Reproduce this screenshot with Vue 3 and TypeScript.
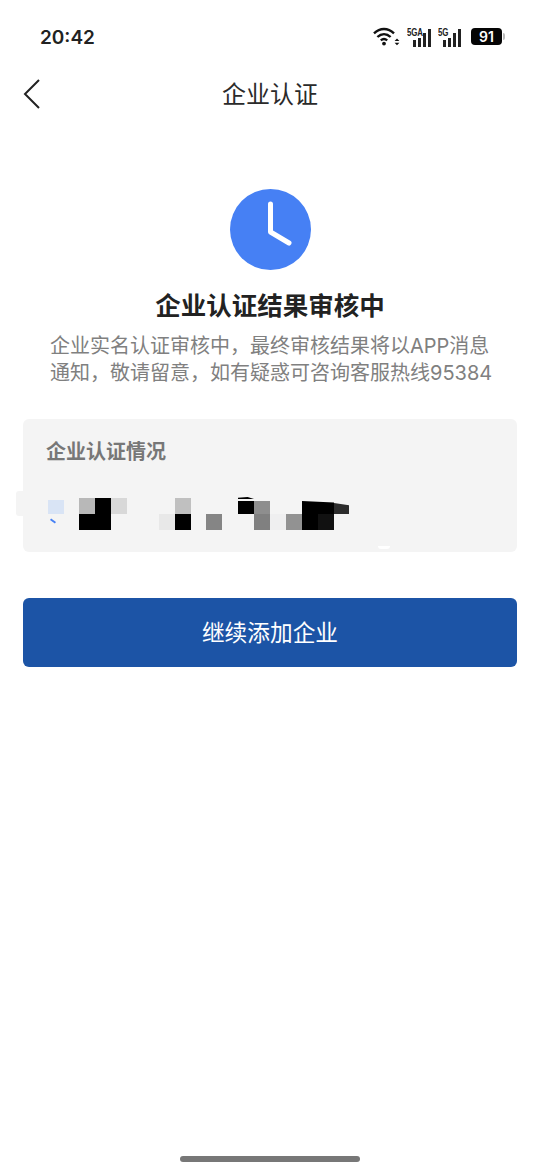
<script setup lang="ts">
interface Cell { x: number; y: number; w: number; h: number; c: string }
const cells: Cell[] = [
  { x: 25, y: 81, w: 16, h: 14, c: '#d9e4f5' },
  { x: 56, y: 79, w: 16, h: 16, c: '#b8b8b8' },
  { x: 72, y: 79, w: 16, h: 16, c: '#000' },
  { x: 88, y: 79, w: 16, h: 16, c: '#d8d8d8' },
  { x: 56, y: 95, w: 32, h: 16, c: '#000' },
  { x: 152, y: 79, w: 16, h: 16, c: '#c0c0c0' },
  { x: 136, y: 95, w: 16, h: 16, c: '#e8e8e8' },
  { x: 152, y: 95, w: 16, h: 16, c: '#000' },
  { x: 183, y: 95, w: 16, h: 16, c: '#858585' },
  { x: 215, y: 82, w: 16, h: 13, c: '#000' },
  { x: 231, y: 82, w: 16, h: 13, c: '#8e8e8e' },
  { x: 231, y: 95, w: 16, h: 16, c: '#808080' },
  { x: 247, y: 95, w: 16, h: 16, c: '#efeff0' },
  { x: 263, y: 95, w: 16, h: 16, c: '#929292' },
  { x: 279, y: 95, w: 16, h: 16, c: '#000' },
  { x: 295, y: 95, w: 16, h: 16, c: '#111' },
]
const cellStyle = (c: Cell) => ({
  left: `${c.x}px`, top: `${c.y}px`, width: `${c.w}px`, height: `${c.h}px`, background: c.c,
})
</script>

<template>
  <div class="page">
    <div class="status">
      <span class="time">20:42</span>
      <div class="status-icons">
        <svg class="wifi" width="27" height="20" viewBox="0 0 27 20" fill="none" stroke="#111" stroke-width="2.4">
          <path d="M1 6.4C7 .6 15 .6 21 6.4" />
          <path d="M4.4 10C8.4 6.2 13.6 6.2 17.6 10" />
          <path d="M7.8 13.4C9.9 11.6 12.1 11.6 14.2 13.4" />
          <circle cx="11" cy="16.6" r="1.9" fill="#111" stroke="none" />
          <path d="M21.6 14L24 11.6L26.4 14Z M21.6 15.8L24 18.2L26.4 15.8Z" fill="#111" stroke="none" />
        </svg>
        <div class="signal sig-a">
          <span class="net">5GA</span>
          <span class="bar b1"></span><span class="bar b2"></span><span class="bar b3"></span><span class="bar b4"></span>
        </div>
        <div class="signal sig-b">
          <span class="net">5G</span>
          <span class="bar b1"></span><span class="bar b2"></span><span class="bar b3"></span><span class="bar b4"></span>
        </div>
        <div class="battery"><span class="level">91</span><span class="cap"></span></div>
      </div>
    </div>

    <header class="nav">
      <svg class="back" width="18" height="30" viewBox="0 0 18 30" fill="none" stroke="#222" stroke-width="2">
        <path d="M16 1L2 15L16 29" />
      </svg>
      <span class="nav-title">企业认证</span>
    </header>

    <main class="content">
      <svg class="clock" width="81" height="81" viewBox="0 0 81 81">
        <circle cx="40.5" cy="40.5" r="40.5" fill="#4680f4" />
        <path d="M40.5 15V43L59 54" fill="none" stroke="#fff" stroke-width="5" stroke-linecap="round" stroke-linejoin="round" />
      </svg>
      <h1 class="heading">企业认证结果审核中</h1>
      <p class="desc">企业实名认证审核中，最终审核结果将以APP消息<br />通知，敬请留意，如有疑惑可咨询客服热线95384</p>

      <section class="card">
        <h2 class="card-title">企业认证情况</h2>
        <span class="bump"></span>
        <span class="tick"></span>
        <span v-for="(c, i) in cells" :key="i" class="cell" :style="cellStyle(c)"></span>
        <span class="cell-wedge wedge-a"></span>
        <span class="cell-wedge wedge-b"></span>
        <span class="cell-wedge wedge-c"></span>
        <span class="chip"></span>
      </section>

      <button class="primary" type="button">继续添加企业</button>
    </main>

    <div class="home-bar"></div>
  </div>
</template>

<style scoped>
.page {
  position: relative;
  width: 540px;
  height: 1172px;
  background: #fff;
  overflow: hidden;
  font-family: "Noto Sans CJK SC", "Noto Sans", sans-serif;
  display: flex;
  flex-direction: column;
}
.status {
  height: 66px;
  padding: 7px 35px 0 40px;
  display: flex;
  align-items: center;
  justify-content: space-between;
  box-sizing: border-box;
}
.time {
  margin-top: 2px;
  font-family: Inter, "Liberation Sans", sans-serif;
  font-size: 19px;
  font-weight: 600;
  color: #222;
}
.status-icons {
  display: flex;
  align-items: center;
  gap: 6px;
}
.signal {
  position: relative;
  height: 20px;
  width: 25px;
  display: flex;
  align-items: flex-end;
  justify-content: flex-end;
  gap: 2px;
}
.sig-b { margin-left: -1px; }
.net {
  position: absolute;
  left: 1px;
  top: 0;
  font-family: "Liberation Sans", sans-serif;
  font-size: 11px;
  font-weight: 700;
  line-height: 10px;
  letter-spacing: -0.3px;
  color: #222;
  transform: scaleX(0.72);
  transform-origin: left top;
}
.sig-b .net { left: 2px; }
.bar { width: 3px; background: #222; }
.b1 { height: 7px; }
.b2 { height: 9px; }
.b3 { height: 14px; }
.b4 { height: 18px; }
.battery {
  display: flex;
  align-items: center;
  margin-left: 4px;
}
.level {
  width: 31px;
  height: 17px;
  background: #050505;
  border-radius: 4px;
  color: #fff;
  font-family: Inter, "Liberation Sans", sans-serif;
  font-size: 14px;
  font-weight: 600;
  line-height: 17px;
  text-align: center;
}
.cap {
  width: 2px;
  height: 7px;
  margin-left: 1px;
  background: #bbb;
  border-radius: 0 2px 2px 0;
}
.nav {
  position: relative;
  height: 56px;
  display: flex;
  align-items: center;
  justify-content: center;
}
.back {
  position: absolute;
  left: 23px;
  top: 13px;
}
.nav-title {
  margin-bottom: 2px;
  font-size: 24px;
  line-height: 30px;
  color: #2a2a2a;
}
.content {
  padding: 67px 23px 0;
  display: flex;
  flex-direction: column;
  align-items: center;
}
.clock { display: block; }
.heading {
  margin: 16px 0 0;
  font-size: 25.5px;
  line-height: 36px;
  font-weight: 700;
  color: #222;
}
.desc {
  margin: 11px 0 0;
  width: 440px;
  font-family: Inter, "Noto Sans CJK SC", sans-serif;
  font-size: 20px;
  line-height: 26.5px;
  color: #808080;
  white-space: nowrap;
}
.card {
  position: relative;
  align-self: stretch;
  height: 133px;
  margin-top: 33px;
  background: #f4f4f4;
  border-radius: 6px;
}
.card-title {
  margin: 0;
  padding: 18px 23px 0;
  font-size: 20px;
  line-height: 28px;
  font-weight: 700;
  color: #777;
}
.bump {
  position: absolute;
  left: -7px;
  top: 72px;
  width: 7px;
  height: 25px;
  background: #f4f4f4;
  border-radius: 3px 0 0 3px;
}
.tick {
  position: absolute;
  left: 27px;
  top: 101px;
  width: 6px;
  height: 2px;
  background: #4680f4;
  transform: rotate(35deg);
}
.cell { position: absolute; }
.cell-wedge { position: absolute; }
.wedge-a {
  left: 279px;
  top: 82px;
  width: 32px;
  height: 13px;
  background: #000;
  clip-path: polygon(0 0, 100% 12%, 100% 100%, 0 100%);
}
.wedge-b {
  left: 311px;
  top: 84px;
  width: 15px;
  height: 11px;
  background: #2c2c2c;
  clip-path: polygon(0 0, 100% 20%, 100% 100%, 0 100%);
}
.wedge-c {
  left: 215px;
  top: 78px;
  width: 16px;
  height: 2px;
  background: #000;
  clip-path: polygon(0 40%, 60% 0, 100% 100%, 0 100%);
}
.chip {
  position: absolute;
  left: 355px;
  top: 127px;
  width: 12px;
  height: 3px;
  background: #fff;
  border-radius: 0 0 6px 6px;
}
.primary {
  align-self: stretch;
  height: 69px;
  margin-top: 46px;
  border: 0;
  border-radius: 6px;
  background: #1c54a6;
  color: #fff;
  font-family: inherit;
  font-size: 22.7px;
  line-height: 32px;
  padding: 0 0 2px;
}
.home-bar {
  position: absolute;
  left: 180px;
  bottom: 10px;
  width: 180px;
  height: 6px;
  border-radius: 3px;
  background: #777;
}
</style>
